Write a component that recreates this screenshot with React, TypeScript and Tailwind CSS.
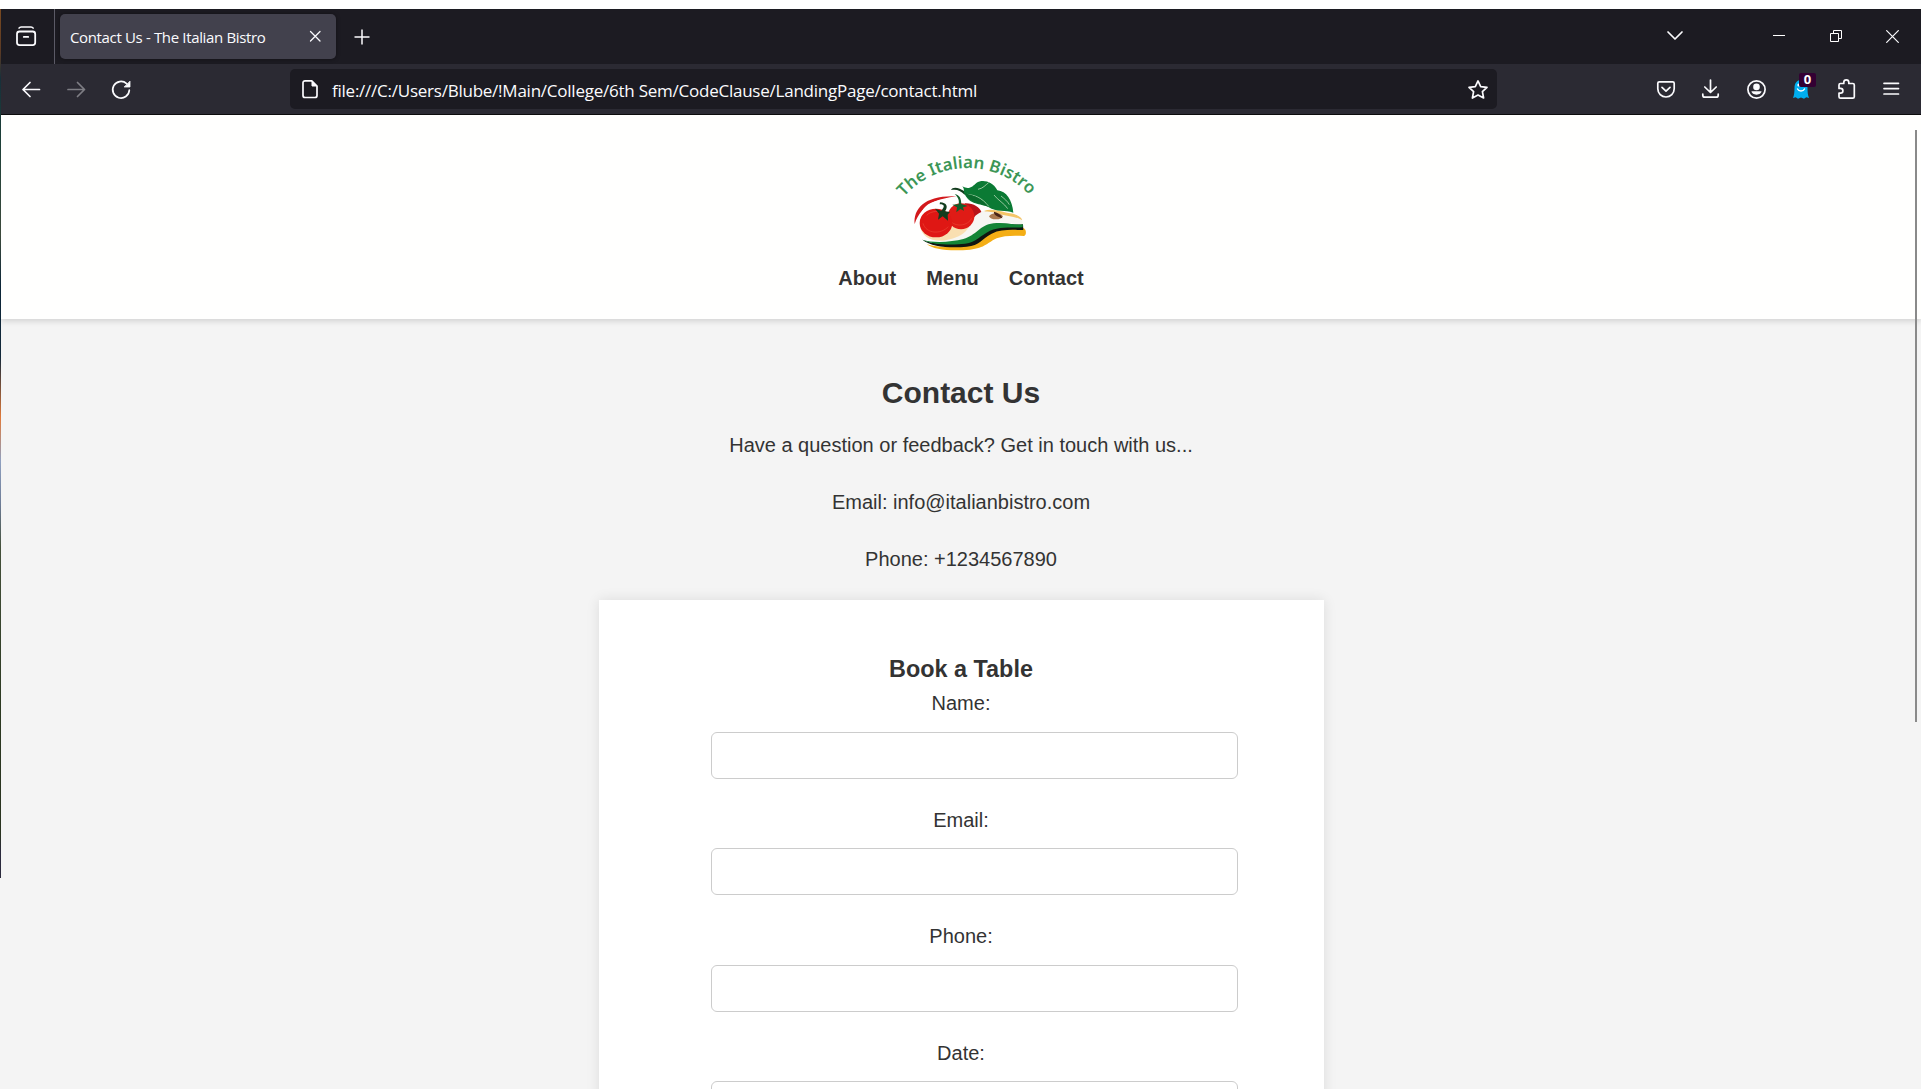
import React from "react";

type IconProps = { children: React.ReactNode; className?: string };

/** 25x26 drawing box for toolbar icons, one unit per pixel. */
function ToolIcon({ children, className = "" }: IconProps) {
  return (
    <svg
      width="25"
      height="26"
      viewBox="0 0 25 26"
      fill="none"
      stroke="currentColor"
      strokeWidth="1.7"
      strokeLinecap="round"
      strokeLinejoin="round"
      className={`shrink-0 ${className}`}
    >
      {children}
    </svg>
  );
}

function ToolCell({ children }: { children: React.ReactNode }) {
  return <div className="relative flex w-[45px] shrink-0 items-center justify-center">{children}</div>;
}

function TabStrip() {
  return (
    <div className="flex h-[55px] bg-[#1c1b22] text-[#fbfbfe]">
      <div className="flex w-[54px] items-center border-r border-[#5b5a66] pl-[13px]">
        <svg width="24" height="26" viewBox="0 0 24 26" fill="none" stroke="currentColor" strokeWidth="1.8" strokeLinecap="round">
          <rect x="3" y="7.5" width="18.2" height="13.6" rx="2.5" />
          <path d="M5 4.2c.5-.9 1.200-1.300 2.200-1.300h9.800c1 0 1.700.4 2.200 1.300" strokeWidth="1.500" />
          <path d="M9.800 12.900h4.400" />
        </svg>
      </div>
      <div className="ml-[5px] mt-[5px] flex h-[45px] w-[276px] items-center justify-between rounded-[5px] bg-[#42414d] pl-[10px] pr-[14px] shadow-[0_0_4px_rgba(0,0,0,0.4)]">
        <span className="whitespace-nowrap pt-[2px] font-['Open_Sans','Noto_Sans',sans-serif] text-[15px] tracking-[-0.35px]">
          Contact Us - The Italian Bistro
        </span>
        <svg width="13" height="13" viewBox="0 0 13 13" stroke="currentColor" strokeWidth="1.3" strokeLinecap="round">
          <path d="M1.500 1.500l9.500 9.500M11 1.500l-9.500 9.500" />
        </svg>
      </div>
      <svg width="16" height="16" viewBox="0 0 16 16" stroke="currentColor" strokeWidth="1.500" className="ml-[18px] mt-[20px]">
        <path d="M.500 8h15M8 .5v15" />
      </svg>
      <div className="ml-auto flex items-start">
        <svg width="18" height="12" viewBox="0 0 18 12" fill="none" stroke="currentColor" strokeWidth="1.7" strokeLinecap="round" strokeLinejoin="round" className="mr-[89px] mt-[21px]">
          <path d="M2 2l7 7 7-7" />
        </svg>
        <div className="mr-[45px] mt-[26px] h-px w-3 bg-white" />
        <svg width="12" height="12" viewBox="0 0 12 12" fill="none" stroke="#fff" className="mr-11 mt-[21px]">
          <path d="M.500 3.500h8v8h-8zM3.500 3.500v-3h8v8h-3" />
        </svg>
        <svg width="13" height="13" viewBox="0 0 13 13" stroke="currentColor" strokeWidth="1.2" className="mr-[22px] mt-[21px]">
          <path d="M.3 .3l12.400 12.400M12.700 .3L.3 12.700" />
        </svg>
      </div>
    </div>
  );
}

function Toolbar() {
  return (
    <div className="flex h-[51px] border-b border-[#0c0c0d] bg-[#2b2a33] text-[#fbfbfe]">
      <div className="flex w-[289px] shrink-0 pl-[8px]">
        <ToolCell>
          <ToolIcon>
            <path d="M20.500 13.500H4M11 6.500l-7 7 7 7" />
          </ToolIcon>
        </ToolCell>
        <ToolCell>
          <ToolIcon className="opacity-40">
            <path d="M4 13.500h16.500M13.500 6.500l7 7-7 7" />
          </ToolIcon>
        </ToolCell>
        <ToolCell>
          <ToolIcon>
            <path d="M20.300 14.200a8.300 8.300 0 1 1-2.700-6.600" />
            <path d="M21 5.500v5.500h-5.500z" fill="currentColor" strokeWidth=".8" />
          </ToolIcon>
        </ToolCell>
      </div>
      <div className="mt-[5px] flex h-10 w-[1207px] shrink-0 items-center rounded-[5px] bg-[#1c1b22] pl-[12px] pr-[8px]">
        <svg width="17" height="20" viewBox="0 0 17 20" fill="none" stroke="currentColor" strokeWidth="1.7" strokeLinejoin="round" className="shrink-0">
          <path d="M9.800 1.800H3a2 2 0 0 0-2 2v12.700a2 2 0 0 0 2 2h10a2 2 0 0 0 2-2V7z" />
          <path d="M10 2v5h5z" fill="currentColor" strokeWidth="1" />
        </svg>
        <span className="ml-[13px] whitespace-nowrap pt-[4px] font-['Open_Sans','Noto_Sans',sans-serif] text-[17px] tracking-[-0.24px]">
          file:///C:/Users/Blube/!Main/College/6th Sem/CodeClause/LandingPage/contact.html
        </span>
        <svg width="22" height="22" viewBox="0 0 22 22" fill="none" stroke="currentColor" strokeWidth="1.7" strokeLinejoin="round" className="ml-auto mt-px">
          <path d="M11 1.900l2.700 5.700 6.300.8-4.600 4.300 1.200 6.300-5.600-3-5.600 3 1.200-6.300L2 8.400l6.300-.8z" />
        </svg>
      </div>
      <div className="ml-[146px] flex">
        <ToolCell>
          <ToolIcon>
            <path d="M6.300 5.800h13.400a1.500 1.500 0 0 1 1.500 1.500v5.500a8.200 8.200 0 0 1-16.400 0V7.300a1.500 1.500 0 0 1 1.500-1.500z" />
            <path d="M9 11.300l4 3.800 4-3.800" />
          </ToolIcon>
        </ToolCell>
        <ToolCell>
          <ToolIcon>
            <path d="M12.500 4v12.300M6.800 11l5.700 5.500 5.700-5.500M4.800 18v1.200a2 2 0 0 0 2 2h11.400a2 2 0 0 0 2-2V18" />
          </ToolIcon>
        </ToolCell>
        <ToolCell>
          <ToolIcon>
            <circle cx="13.500" cy="13.500" r="8.600" />
            <circle cx="13.500" cy="10.900" r="3.300" fill="currentColor" stroke="none" />
            <path d="M8.500 15.300h10c0 1.800-2.300 3.400-5 3.400s-5-1.600-5-3.400z" fill="currentColor" stroke="none" />
          </ToolIcon>
        </ToolCell>
        <ToolCell>
          <ToolIcon>
            <path d="M6.500 12c0-5 2.500-8 6.500-8s6.500 3 6.500 8c0 4 .3 7 1.500 10l-2.700-.8-2.300 1.500-3-1.200-3 1.200-2.300-1.500L5 22c1.200-3 1.500-6 1.500-10z" fill="#00aef0" stroke="none" />
            <path d="M9.500 13c1.300 2.600 5.700 2.600 7 0" stroke="#fff" strokeWidth="1.400" />
            <circle cx="10.800" cy="9" r="1.500" fill="#fff" stroke="none" />
          </ToolIcon>
          <span className="absolute left-[21px] top-[9px] flex h-[14px] w-[17px] items-center justify-center rounded-[2px] bg-[#330033] pb-px font-['Open_Sans','Noto_Sans',sans-serif] text-[13px] font-bold leading-none text-white">
            0
          </span>
        </ToolCell>
        <ToolCell>
          <ToolIcon>
            <path d="M10.800 7.500V6.300a2.500 2.500 0 0 1 5 0v1.200h4a1.500 1.500 0 0 1 1.500 1.500v11.700a1.500 1.500 0 0 1-1.500 1.500H7.500A1.500 1.500 0 0 1 6 20.700v-3.500h1.500a2.400 2.400 0 0 0 0-4.800H6V9a1.500 1.500 0 0 1 1.500-1.500z" />
          </ToolIcon>
        </ToolCell>
        <ToolCell>
          <ToolIcon>
            <path d="M6 7.300h14.500M6 12.600h14.500M6 18h14.500" />
          </ToolIcon>
        </ToolCell>
      </div>
    </div>
  );
}

function BistroLogo() {
  return (
    <svg width="170" height="120" viewBox="-12 0 510 360" role="img" aria-label="The Italian Bistro">
      <defs>
        <path id="logo-arc" d="M72 171A253 253 0 0 1 460 179" />
      </defs>
      <text fill="#3c9656" fontSize="50" fontWeight="600" fontFamily="'Noto Sans','Open Sans',sans-serif">
        <textPath href="#logo-arc" textLength="424" lengthAdjust="spacingAndGlyphs">
          The Italian Bistro
        </textPath>
      </text>

      {/* red swoosh over the tomatoes */}
      <path d="M104 252C100 205 135 165 230 169C175 176 125 190 104 252z" fill="#d3191c" />
      <path d="M128 214C140 192 165 182 200 180" stroke="#fff" strokeWidth="4" fill="none" />

      {/* tomato undersides and cheese */}
      <path d="M121 258C123 287 150 305 190 302C238 302 272 286 275 257C250 268 230 265 216 259C200 290 152 300 121 258z" fill="#f9dfb1" />
      <path d="M270 250C272 232 290 212 322 211C355 210 380 222 402 225C425 230 430 242 427 254C400 252 370 242 335 251C300 262 290 287 250 300C225 305 205 305 190 303C225 295 262 285 270 250z" fill="#f6f6f2" />
      <path d="M312 213C338 203 365 218 400 221C415 226 425 232 427 241C410 229 380 229 355 221C340 214 325 217 312 213z" fill="#f4c568" />
      <ellipse cx="348" cy="229" rx="20" ry="9" fill="#aa7950" />
      <path d="M342 215C354 219 364 224 367 235C354 229 340 226 342 215z" fill="#472316" />

      {/* board */}
      <path d="M140 312C165 322 200 322 240 316C285 308 300 280 345 266C375 260 405 264 430 264C440 268 440 285 432 288C400 286 370 287 350 295C325 306 315 325 270 329C215 334 160 330 140 312z" fill="#f4ae15" />
      <path d="M127 299C160 315 215 312 255 303C295 292 300 262 345 253C375 248 405 256 429 253L430 270C400 270 365 266 335 281C305 297 300 316 260 320C215 324 155 322 127 299z" fill="#101510" />
      <path d="M127 299C160 310 215 306 250 297C290 286 298 256 340 250C375 245 405 256 429 253L428 262C400 264 360 259 330 272C300 287 290 306 255 311C215 316 155 314 127 299z" fill="#138536" />

      {/* tomatoes */}
      <path d="M255 190C280 189 300 202 304 216C287 222 275 240 270 252C255 245 245 200 255 190z" fill="#b81318" />
      <ellipse cx="243" cy="229" rx="40" ry="39" fill="#df1b16" />
      <path d="M213 245C230 262 264 257 275 235" stroke="#ea4232" strokeWidth="2" fill="none" />
      <ellipse cx="168" cy="249" rx="49" ry="43" fill="#df1714" />
      <path d="M129 250C138 282 183 284 205 260" stroke="#ea4232" strokeWidth="2" fill="none" />
      <path d="M140 226C153 211 180 213 194 218" stroke="#ea4a3a" strokeWidth="2" fill="none" />
      <path d="M184 212L165 206L177 221L174 239L188 229L204 242L203 224L210 216L195 214C205 201 201 188 180 187L179 193C195 193 194 201 184 212z" fill="#123d1d" />
      <path d="M236 193L217 194L231 202L229 217L241 207L252 212L249 202L263 198L244 192C244 177 239 164 224 162C236 173 238 182 236 193z" fill="#125f2a" />

      {/* basil */}
      <path d="M213 150C218 141 232 139 258 157L254 164C240 150 229 147 213 150z" fill="#123b1c" />
      <path d="M247 139C268 151 277 139 290 128C304 118 337 120 352 151C379 153 397 181 400 218C376 208 350 218 325 201C301 190 269 195 254 162C248 154 256 151 247 139z" fill="#0b7a34" />
      <path d="M262 163C285 166 305 172 326 199M294 148C310 145 316 135 326 128M342 165C354 181 373 190 383 206M363 168C374 177 382 183 388 194" stroke="#dcebd0" strokeWidth="2" fill="none" />
      <path d="M325 200C305 178 287 167 254 160C265 183 291 189 325 200z" fill="#0a6a2c" />
    </svg>
  );
}

const fields = ["Name:", "Email:", "Phone:", "Date:"];

function SiteHeader() {
  return (
    <header className="relative z-10 flex h-[204px] shrink-0 flex-col items-center bg-[#fffffe] pt-[25px] shadow-[0_2px_6px_rgba(0,0,0,0.15)]">
      <BistroLogo />
      <nav className="mt-[2px] flex h-8 items-center gap-[30px] text-[20px] font-bold leading-8 tracking-[0.08px]">
        <a>About</a>
        <a>Menu</a>
        <a>Contact</a>
      </nav>
    </header>
  );
}

function BookingForm() {
  return (
    <form className="h-[700px] w-[725px] bg-white pt-[53px] shadow-[0_0_12.5px_rgba(0,0,0,0.1)]">
      <h3 className="text-[23.4px] font-bold leading-[32px]">Book a Table</h3>
      {fields.map((label) => (
        <div key={label} className="h-[116.4px]">
          <label className="block h-[47px] pt-[2.35px] leading-8">{label}</label>
          <input className="ml-[112px] block h-[47px] w-[527px] rounded-[6px] border border-[#ccc] bg-white px-3" />
        </div>
      ))}
    </form>
  );
}

export default function App() {
  return (
    <div className="flex h-[1089px] w-[1921px] flex-col overflow-hidden bg-white">
      <div className="h-[9px] shrink-0 bg-white" />
      <div className="flex min-h-0 flex-1">
        <div className="flex w-px shrink-0 flex-col bg-[#f4f4f4]">
          <div className="h-[869px] bg-[linear-gradient(to_bottom,#7a4a20_0%,#5a3a25_5%,#17303a_8%,#1d4038_15%,#3c4a3c_26%,#0c2638_32%,#12283a_40%,#e07a3a_47%,#8fa0c0_52%,#6d7c96_57%,#44503a_62%,#2d3a22_80%,#2a3320_95%,#2b2a3d_97%)]" />
        </div>
        <div className="flex min-w-0 flex-1 flex-col">
          <TabStrip />
          <Toolbar />
          <div className="relative flex min-h-0 flex-1 flex-col overflow-hidden bg-[#f4f4f4] font-['Liberation_Sans',Arial,sans-serif] text-[20px] text-[#333]">
            <SiteHeader />
            <main className="flex flex-col items-center text-center">
              <h2 className="mt-[50px] h-[48px] text-[30px] font-bold leading-[48px]">Contact Us</h2>
              <p className="mt-[12px] h-8 leading-8">Have a question or feedback? Get in touch with us...</p>
              <p className="mt-[25px] h-8 leading-8">Email: info@italianbistro.com</p>
              <p className="mb-[25px] mt-[25px] h-8 leading-8">Phone: +1234567890</p>
              <BookingForm />
            </main>
            <div className="absolute right-1 top-[15px] z-20 h-[592px] w-[2px] bg-[#8a8a8a]" />
          </div>
        </div>
      </div>
    </div>
  );
}
